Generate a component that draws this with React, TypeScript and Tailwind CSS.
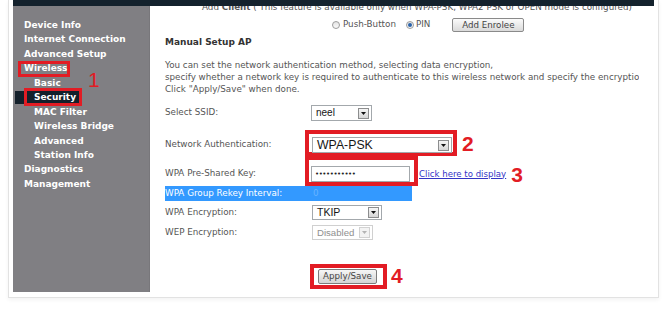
import React from 'react'

const menu = [
  { label: 'Device Info', sub: false },
  { label: 'Internet Connection', sub: false },
  { label: 'Advanced Setup', sub: false },
  { label: 'Wireless', sub: false, boxed: true },
  { label: 'Basic', sub: true },
  { label: 'Security', sub: true, active: true },
  { label: 'MAC Filter', sub: true },
  { label: 'Wireless Bridge', sub: true },
  { label: 'Advanced', sub: true },
  { label: 'Station Info', sub: true },
  { label: 'Diagnostics', sub: false },
  { label: 'Management', sub: false },
]

function Arrow({ disabled }: { disabled?: boolean }) {
  return (
    <span
      className={`flex h-[11px] w-[11px] shrink-0 items-center justify-center border ${
        disabled ? 'border-[#d2d2d2] bg-[#f3f3f3]' : 'border-[#8c8d8e] bg-gradient-to-b from-[#f6f6f6] to-[#d6d6d6]'
      }`}
    >
      <svg width="5" height="3" viewBox="0 0 5 3">
        <path d="M0 0h5L2.5 3z" fill={disabled ? '#b4b4b4' : '#111'} />
      </svg>
    </span>
  )
}

function Select({ value, className, disabled }: { value: string; className: string; disabled?: boolean }) {
  return (
    <div
      className={`flex h-full items-center justify-between border bg-white pl-[4px] pr-[2px] font-['Liberation_Sans',Arial,sans-serif] leading-none ${
        disabled ? 'border-[#d0d0d0] text-[#8f8f8f]' : 'border-[#a3a8ac] text-[#161616]'
      } ${className}`}
    >
      <span className="whitespace-nowrap">{value}</span>
      <Arrow disabled={disabled} />
    </div>
  )
}

function Mark({ n, className }: { n: string; className: string }) {
  return (
    <span className={`font-['Liberation_Sans',Arial,sans-serif] text-[21px] font-bold leading-none text-[#e21c24] ${className}`}>{n}</span>
  )
}

function Sidebar() {
  return (
    <aside className="relative w-[137px] shrink-0 border-r border-[#78777b] bg-[#807f83] pt-[12px] text-[9px] font-bold leading-[14.45px] text-white">
      {menu.map((m) => (
        <div key={m.label} className={`relative h-[14.45px] whitespace-nowrap ${m.sub ? 'pl-[21px]' : 'pl-[11px]'}`}>
          {m.boxed && (
            <>
              <span className="absolute left-[5px] top-0 h-[16px] w-[52px] border-[3px] border-[#e21c24]" />
              <Mark n="1" className="absolute left-[75px] top-[8px] font-normal" />
            </>
          )}
          {m.active && (
            <>
              <span className="absolute left-[2px] top-[1px] h-[13px] w-[67px] bg-[#13202b]" />
              <span className="absolute left-[11px] top-[-2px] h-[18px] w-[58px] border-[3px] border-[#e21c24]" />
            </>
          )}
          <span className="relative">{m.label}</span>
        </div>
      ))}
    </aside>
  )
}

function Radio({ on }: { on?: boolean }) {
  return (
    <span className="flex h-[8px] w-[8px] items-center justify-center rounded-full border border-[#9c9c9c] bg-gradient-to-b from-[#e4e4e4] to-[#fafafa]">
      {on && <span className="h-[4px] w-[4px] rounded-full bg-[#2b63a8]" />}
    </span>
  )
}

export default function App() {
  return (
    <div className="h-[310px] w-[666px] overflow-hidden bg-white font-['DejaVu_Sans',sans-serif]">
      <div className="ml-[8px] flex h-[298px] w-[651px] flex-col border border-t-0 border-[#e2e2e2] px-[4px] pb-[5px] shadow-[0_2px_4px_rgba(0,0,0,0.05)]">
        <div className="h-[6px] shrink-0 bg-[#14222d]" />
        <div className="flex min-h-0 flex-1">
          <Sidebar />
          <main className="w-[489px] overflow-hidden text-[8.75px] text-[#555]">
            <div className="-mt-[4px] h-[11px] whitespace-nowrap pl-[52px] leading-[11px]">
              Add <b>Client</b> ( This feature is available only when WPA-PSK, WPA2 PSK or OPEN mode is configured)
            </div>

            <div className="mt-[5px] flex h-[14px] items-center pl-[182px]">
              <Radio />
              <span className="ml-[3px]">Push-Button</span>
              <span className="ml-[10px]"><Radio on /></span>
              <span className="ml-[2px]">PIN</span>
              <button className="ml-[22px] h-[14px] w-[72px] rounded-[2px] border border-[#8a8a8a] bg-gradient-to-b from-[#fbfbfb] to-[#dadada] text-[8.7px] leading-none text-[#444]">
                Add Enrolee
              </button>
            </div>

            <div className="mt-[4px] h-[12px] pl-[15px] text-[9px] font-bold leading-[12px] text-[#333]">Manual Setup AP</div>

            <div className="mt-[11px] whitespace-nowrap pl-[15px] leading-[12px]">
              <p>You can set the network authentication method, selecting data encryption,</p>
              <p>specify whether a network key is required to authenticate to this wireless network and specify the encryption strength.</p>
              <p>Click &quot;Apply/Save&quot; when done.</p>
            </div>

            <div className="mt-[10px] flex h-[16px] items-center pl-[15px]">
              <span className="w-[146px]">Select SSID:</span>
              <Select value="neel" className="w-[61px] text-[10px]" />
            </div>

            <div className="mt-[16px] flex h-[16px] items-center pl-[15px]">
              <span className="w-[147px]">Network Authentication:</span>
              <div className="relative h-full">
                <span className="absolute -left-[7px] -top-[7px] h-[26px] w-[152px] border-[4px] border-[#e21c24]" />
                <Select value="WPA-PSK" className="relative w-[140px] text-[12.3px]" />
              </div>
              <Mark n="2" className="ml-[10px] -mt-[3px]" />
            </div>

            <div className="mt-[13px] flex h-[16px] items-center pl-[15px]">
              <span className="w-[146px]">WPA Pre-Shared Key:</span>
              <div className="relative h-full">
                <span className="absolute -left-[6px] -top-[10px] h-[30px] w-[113px] border-[4px] border-[#e21c24]" />
                <div className="relative flex h-full w-[99px] items-center border border-[#a3a8ac] bg-white pl-[3px] text-[7px] tracking-[-0.45px] text-[#222]">
                  •••••••••••
                </div>
              </div>
              <a className="ml-[9px] text-[8.6px] text-[#3434c6] underline">Click here to display</a>
              <Mark n="3" className="ml-[5px]" />
            </div>

            <div className="ml-[15px] mt-[4px] flex h-[15px] w-[247px] items-center bg-[#3399ff] text-white">
              <span className="w-[148px]">WPA Group Rekey Interval:</span>
              <span className="text-[#66b3ff]">0</span>
            </div>

            <div className="mt-[4px] flex h-[15px] items-center pl-[15px]">
              <span className="w-[147px]">WPA Encryption:</span>
              <Select value="TKIP" className="w-[70px] text-[10.5px]" />
            </div>

            <div className="mt-[5px] flex h-[15px] items-center pl-[15px]">
              <span className="w-[147px]">WEP Encryption:</span>
              <Select value="Disabled" disabled className="w-[61px] gap-[2px] text-[9.6px]" />
            </div>

            <div className="mt-[29px] flex h-[15px] items-center pl-[168px]">
              <div className="relative h-full">
                <span className="absolute -left-[8px] -top-[5px] h-[25px] w-[77px] border-[4px] border-[#e21c24]" />
                <button className="relative h-[15px] w-[59px] rounded-[2px] border border-[#7c7c7c] bg-gradient-to-b from-[#f6f6f6] to-[#d4d4d4] text-[8.7px] leading-none text-[#444]">
                  Apply/Save
                </button>
              </div>
              <Mark n="4" className="ml-[14px] -mt-[2px]" />
            </div>
          </main>
        </div>
      </div>
    </div>
  )
}
